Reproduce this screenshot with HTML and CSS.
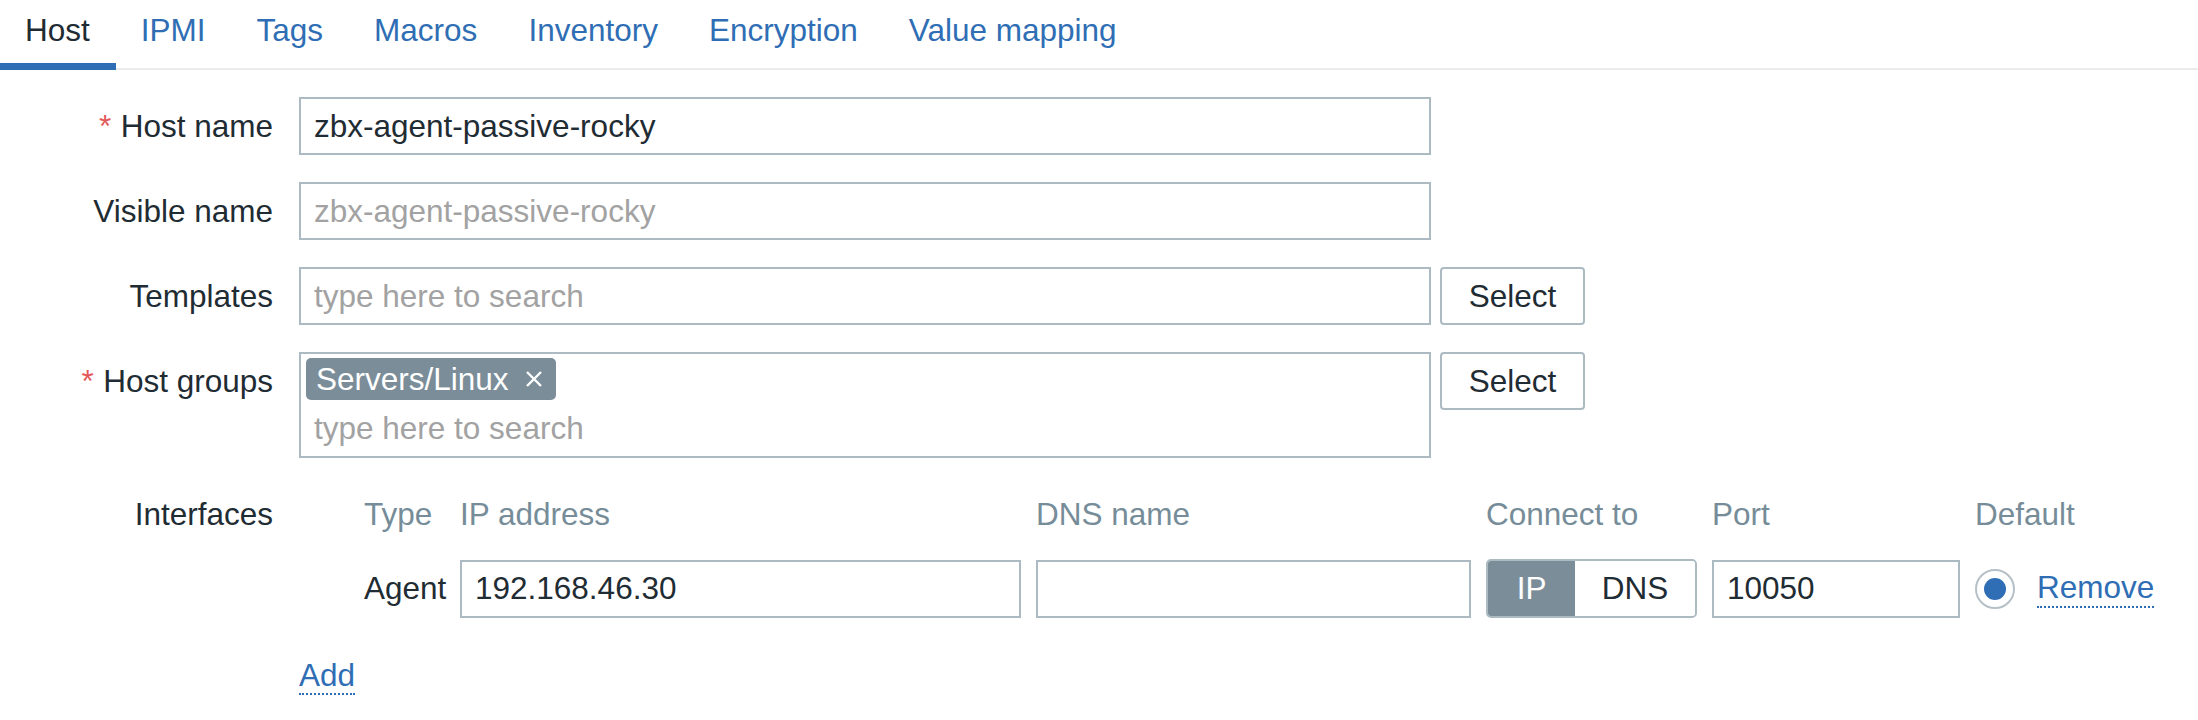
FILE: index.html
```html
<!DOCTYPE html>
<html lang="en">
<head>
<meta charset="utf-8">
<title>Host</title>
<link rel="stylesheet" href="styles.css">
</head>
<body>
<nav class="tabs">
  <span class="tab active">Host</span>
  <span class="tab">IPMI</span>
  <span class="tab">Tags</span>
  <span class="tab">Macros</span>
  <span class="tab">Inventory</span>
  <span class="tab">Encryption</span>
  <span class="tab">Value mapping</span>
</nav>
<form class="form">
  <label class="label req">Host name</label>
  <div class="field"><input class="text-input" type="text" value="zbx-agent-passive-rocky"></div>

  <label class="label">Visible name</label>
  <div class="field"><input class="text-input" type="text" placeholder="zbx-agent-passive-rocky"></div>

  <label class="label">Templates</label>
  <div class="field"><input class="text-input" type="text" placeholder="type here to search"><button type="button" class="btn">Select</button></div>

  <label class="label req">Host groups</label>
  <div class="field">
    <div class="multiselect">
      <span class="tag">Servers/Linux<svg class="tag-x" width="18" height="18" viewBox="0 0 18 18"><path d="M2 2 L16 16 M16 2 L2 16" stroke="#fff" stroke-width="2.4" fill="none"/></svg></span>
      <input class="ms-input" type="text" placeholder="type here to search">
    </div>
    <button type="button" class="btn">Select</button>
  </div>

  <label class="label">Interfaces</label>
  <div class="ifaces">
    <div class="iface-grid">
      <span></span>
      <span class="head">Type</span>
      <span class="head">IP address</span>
      <span class="head">DNS name</span>
      <span class="head">Connect to</span>
      <span class="head">Port</span>
      <span class="head">Default</span>

      <span></span>
      <span class="type">Agent</span>
      <input class="text-input full" type="text" value="192.168.46.30">
      <input class="text-input full" type="text" value="">
      <div class="toggle"><span class="seg on">IP</span><span class="seg">DNS</span></div>
      <input class="text-input full" type="text" value="10050">
      <div class="default-cell"><span class="radio"><span class="dot"></span></span><a class="link" href="#">Remove</a></div>
    </div>
    <div class="add-row"><a class="link" href="#">Add</a></div>
  </div>
</form>
</body>
</html>
```
FILE: styles.css
```css
* { box-sizing: border-box; }
html, body { margin: 0; padding: 0; background: #fff; }
body {
  font-family: "Liberation Sans", Arial, Helvetica, sans-serif;
  font-size: 31.5px;
  color: #1f2c33;
}

.tabs {
  display: flex;
  height: 70px;
  border-bottom: 2px solid #ebebeb;
}
.tab {
  height: 70px;
  padding: 12px 26px 15px 25px;
  line-height: 36px;
  border-bottom: 7px solid transparent;
  color: #2f6eb4;
  white-space: nowrap;
}
.tab.active {
  color: #1f2c33;
  border-bottom-color: #2f6eb4;
}

.form {
  display: grid;
  grid-template-columns: 273px auto;
  column-gap: 26px;
  row-gap: 27px;
  margin-top: 27px;
  align-items: start;
}
.label {
  text-align: right;
  line-height: 58px;
  white-space: nowrap;
}
.label.req::before {
  content: "*";
  color: #e45959;
  margin-right: 0.3em;
}

.field {
  display: flex;
  gap: 9px;
  align-items: flex-start;
}
.text-input {
  width: 1132px;
  height: 58px;
  border: 2px solid #acbbc2;
  padding: 0 13px;
  font: inherit;
  color: #1f2c33;
  background: #fff;
  outline: none;
  border-radius: 0;
}
.text-input::placeholder, .ms-input::placeholder { color: #a2a2a2; opacity: 1; }
.text-input.full { width: 100%; }

.btn {
  width: 145px;
  height: 58px;
  border: 2px solid #acbbc2;
  border-radius: 4px;
  background: #fff;
  font: inherit;
  color: #1f2c33;
  padding: 0;
}

.multiselect {
  width: 1132px;
  height: 106px;
  border: 2px solid #acbbc2;
  padding: 4px 5px 0;
  display: flex;
  flex-direction: column;
  align-items: flex-start;
}
.tag {
  display: inline-flex;
  align-items: center;
  height: 42px;
  padding: 0 13px 0 10px;
  background: #7b8d99;
  color: #fff;
  border-radius: 5px;
  gap: 16px;
}
.tag-x { display: block; width: 18px; height: 18px; }
.ms-input {
  width: 100%;
  height: 56px;
  border: 0;
  padding: 0 8px;
  font: inherit;
  color: #1f2c33;
  outline: none;
  background: transparent;
}

.iface-grid {
  display: grid;
  grid-template-columns: 50px 81px 561px 435px 211px 248px auto;
  column-gap: 15px;
  row-gap: 16px;
  align-items: center;
}
.head {
  color: #768d99;
  line-height: 58px;
  white-space: nowrap;
}
.type { white-space: nowrap; }

.toggle {
  display: flex;
  height: 59px;
  border: 2px solid #acbbc2;
  border-radius: 5px;
  overflow: hidden;
}
.seg {
  display: flex;
  align-items: center;
  justify-content: center;
  width: 121px;
  background: #fff;
  color: #1f2c33;
}
.seg.on {
  width: 88px;
  background: #7b8d99;
  color: #fff;
}

.default-cell {
  display: flex;
  align-items: center;
  gap: 22px;
}
.radio {
  width: 40px;
  height: 40px;
  border: 2px solid #b5c1c7;
  border-radius: 50%;
  display: flex;
  align-items: center;
  justify-content: center;
}
.dot {
  width: 22px;
  height: 22px;
  border-radius: 50%;
  background: #2f6eb4;
}
.link {
  color: #2f6eb4;
  text-decoration: none;
  border-bottom: 2px dotted #2f6eb4;
}
.add-row {
  margin-top: 28px;
  line-height: 58px;
}
```
